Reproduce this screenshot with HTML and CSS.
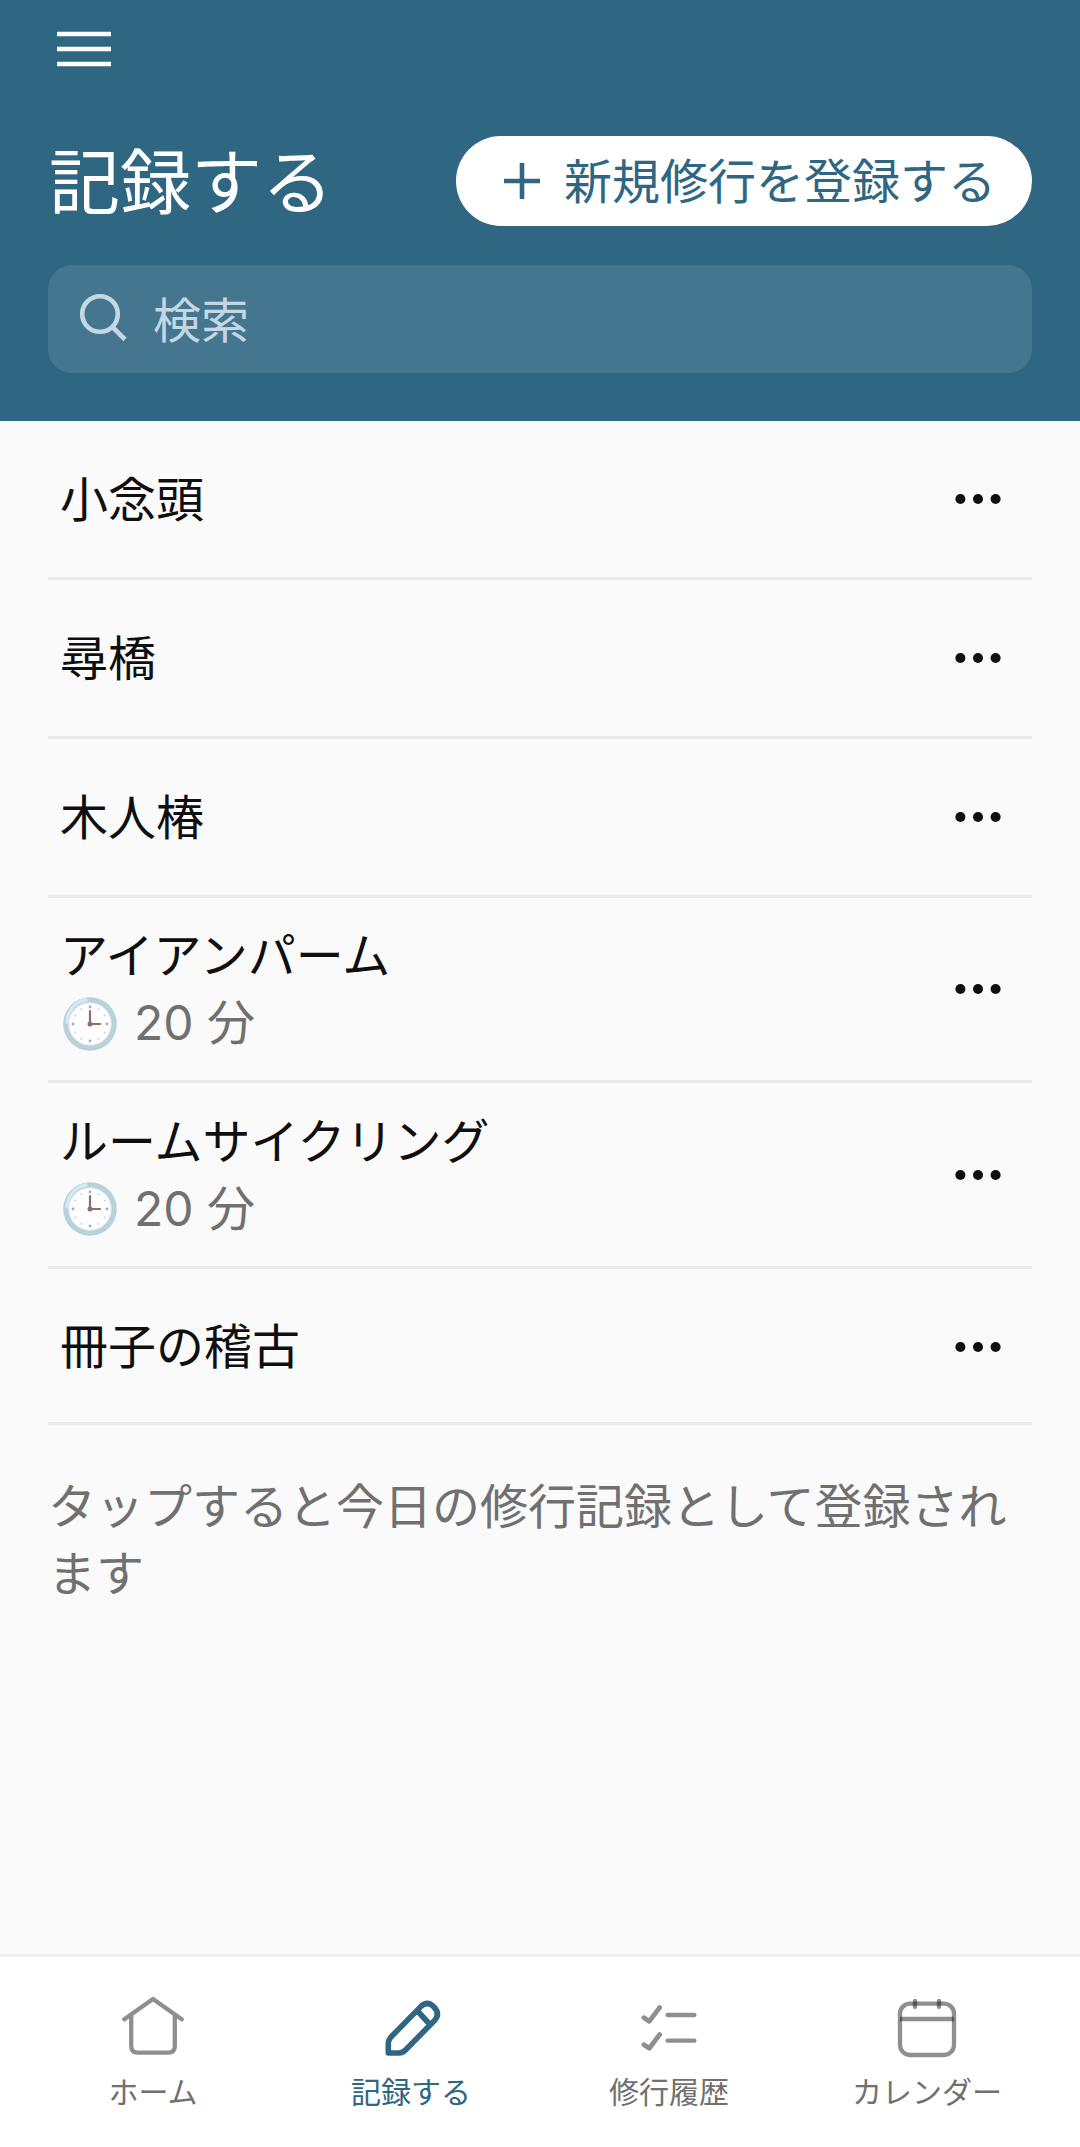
FILE: index.html
```html
<!DOCTYPE html>
<html lang="ja">
<head>
  <meta charset="UTF-8" />
  <meta name="viewport" content="width=device-width, initial-scale=1" />
  <title>記録する</title>
  <link rel="stylesheet" href="styles.css">
</head>
<body>

<!-- shared icons -->
<svg class="defs" width="0" height="0">
  <symbol id="dots" viewBox="0 0 48 48">
    <circle cx="6.4" cy="24" r="5" />
    <circle cx="24" cy="24" r="5" />
    <circle cx="41.6" cy="24" r="5" />
  </symbol>
  <symbol id="clock" viewBox="0 0 54 54">
    <circle cx="27" cy="27" r="26.8" fill="#b8d2dc" />
    <path d="M4 25C5 13 12 5 23 3" fill="none" stroke="#d3eaf4" stroke-width="3.4" stroke-linecap="round" />
    <circle cx="27" cy="27" r="21.3" fill="#fefefe" stroke="#e6e4dc" stroke-width="1" />
    <g fill="#8fb6c6">
      <circle cx="27" cy="10" r="1.4" /><circle cx="44" cy="27" r="1.4" />
      <circle cx="27" cy="44" r="1.4" /><circle cx="10" cy="27" r="1.4" />
    </g>
    <g fill="#c6d3d9">
      <circle cx="35.5" cy="12.3" r="1" /><circle cx="41.7" cy="18.5" r="1" />
      <circle cx="41.7" cy="35.5" r="1" /><circle cx="35.5" cy="41.7" r="1" />
      <circle cx="18.5" cy="41.7" r="1" /><circle cx="12.3" cy="35.5" r="1" />
      <circle cx="12.3" cy="18.5" r="1" /><circle cx="18.5" cy="12.3" r="1" />
    </g>
    <path d="M27 14V27H37" fill="none" stroke="#8d6e68" stroke-width="2.2" stroke-linecap="round" />
    <circle cx="27" cy="27" r="2.5" fill="#8d6e68" />
  </symbol>
</svg>

<header class="header">
  <button class="menu-btn" aria-label="menu">
    <svg width="54" height="36" viewBox="0 0 54 36"><path d="M0 3H54M0 18H54M0 33H54" /></svg>
  </button>
  <div class="title-row">
    <h1>記録する</h1>
    <button class="add-btn">
      <svg width="36" height="36" viewBox="0 0 36 36"><path d="M18 0V36M0 18H36" /></svg>
      <span>新規修行を登録する</span>
    </button>
  </div>
  <div class="search">
    <svg width="48" height="48" viewBox="0 0 48 48"><circle cx="20" cy="18" r="17.8" /><path d="M32.5 31L45 43.5" /></svg>
    <span>検索</span>
  </div>
</header>

<main class="content">
  <ul class="list">
    <li class="item"><div class="name">小念頭</div><svg class="more"><use href="#dots" /></svg></li>
    <li class="item"><div class="name">尋橋</div><svg class="more"><use href="#dots" /></svg></li>
    <li class="item"><div class="name">木人椿</div><svg class="more"><use href="#dots" /></svg></li>
    <li class="item timed">
      <div>
        <div class="name">アイアンパーム</div>
        <div class="time"><svg class="clock"><use href="#clock" /></svg>20 分</div>
      </div>
      <svg class="more"><use href="#dots" /></svg>
    </li>
    <li class="item timed last-timed">
      <div>
        <div class="name">ルームサイクリング</div>
        <div class="time"><svg class="clock"><use href="#clock" /></svg>20 分</div>
      </div>
      <svg class="more"><use href="#dots" /></svg>
    </li>
    <li class="item last"><div class="name">冊子の稽古</div><svg class="more"><use href="#dots" /></svg></li>
  </ul>
  <p class="hint">タップすると今日の修行記録として登録されます</p>
</main>

<nav class="tabbar">
  <a class="tab">
    <svg viewBox="0 0 72 72"><path d="M7.3 27.3L36 7L64.7 27.3M14.2 23V54Q14.2 60.7 21 60.7H51Q57.8 60.7 57.8 54V23" /></svg>
    <span>ホーム</span>
  </a>
  <a class="tab active">
    <svg viewBox="0 0 72 72"><path d="M13.3 61V51.5Q13.3 48 16 45L46 14.4Q52.4 8.4 59 15Q65.5 22 59.5 28.5L30.5 58Q27.5 61 24 61ZM43 19.5L54 31.5" /></svg>
    <span>記録する</span>
  </a>
  <a class="tab">
    <svg viewBox="0 0 72 72"><path class="check" d="M10.9 25.7L16.3 29.3L26.6 15.6M10.9 52.7L16.3 56.3L26.6 42.6" /><path d="M34.6 23H61.4M34.6 48.7H61.4" /></svg>
    <span>修行履歴</span>
  </a>
  <a class="tab">
    <svg viewBox="0 0 72 72"><rect x="9" y="11.7" width="54" height="51.3" rx="10" /><path class="butt" d="M9 27H63" /><path d="M24 9V15M48 9V15" /></svg>
    <span>カレンダー</span>
  </a>
</nav>

</body>
</html>
```

FILE: styles.css
```css
* {
  box-sizing: border-box;
}

body {
  margin: 0;
  min-height: 2147px;
  display: flex;
  flex-direction: column;
  background: #fafafa;
  color: #0f0f0f;
  font-family: Inter, "Noto Sans CJK JP", sans-serif;
  font-size: 48px;
  line-height: 67px;
}

.defs {
  position: absolute;
}

button {
  border: none;
  background: none;
  padding: 0;
  font: inherit;
}

/* header */
.header {
  height: 421px;
  padding: 31px 48px 0;
  background: #2f6681;
  color: white;
}

.menu-btn {
  display: block;
  margin-left: 9px;
  height: 36px;
}

.menu-btn svg {
  display: block;
  stroke: white;
  stroke-width: 4.6;
}

.title-row {
  display: flex;
  justify-content: space-between;
  align-items: center;
  height: 90px;
  margin-top: 69px;
}

h1 {
  margin: 0;
  padding: 1px 0 0 1px;
  font-size: 71px;
  font-weight: 400;
  line-height: 90px;
}

.add-btn {
  display: flex;
  align-items: center;
  gap: 24px;
  width: 576px;
  height: 90px;
  padding-left: 48px;
  border-radius: 45px;
  background: white;
  color: #2f6681;
  white-space: nowrap;
}

.add-btn svg {
  stroke: #2f6681;
  stroke-width: 4.6;
}

.search {
  display: flex;
  align-items: center;
  gap: 25px;
  height: 108px;
  margin-top: 39px;
  padding: 2px 0 0 32px;
  border-radius: 24px;
  background: #45768f;
  color: #c5d7e2;
}

.search svg {
  overflow: visible;
  fill: none;
  stroke: #c5d7e2;
  stroke-width: 4.6;
}

/* list */
.content {
  flex: 1;
  padding: 0 48px;
}

.list {
  margin: 0;
  padding: 0;
  list-style: none;
}

.item {
  display: flex;
  justify-content: space-between;
  align-items: center;
  height: 159px;
  padding: 0 30px 0 12px;
  border-bottom: 3px solid #e9e9e9;
}

.timed {
  height: 185px;
}

.last-timed {
  height: 186px;
}

.last {
  height: 156px;
  padding-top: 2px;
}

.more {
  width: 48px;
  height: 48px;
  fill: #0f0f0f;
}

.time {
  display: flex;
  align-items: center;
  color: #707070;
}

.clock {
  width: 54px;
  height: 54px;
  margin: 2px 17px 0 3px;
}

.hint {
  margin: 48px 0 0;
  color: #707070;
  word-break: break-all;
}

/* bottom tabs */
.tabbar {
  display: flex;
  height: 193px;
  padding: 35px 24px 0;
  border-top: 3px solid #efefef;
  background: white;
}

.tab {
  flex: 1;
  display: flex;
  flex-direction: column;
  align-items: center;
  color: #707070;
  font-size: 30px;
  line-height: 42px;
}

.tab svg {
  width: 72px;
  height: 72px;
  margin-bottom: 7px;
  fill: none;
  stroke: #111;
  stroke-opacity: 0.47;
  stroke-width: 4.3;
  stroke-linecap: round;
  stroke-linejoin: round;
}

.tab .check {
  stroke-width: 4.8;
}

.tab .butt {
  stroke-linecap: butt;
}

.active {
  color: #2f6681;
}

.active svg {
  stroke: #2f6681;
  stroke-opacity: 1;
  stroke-width: 5.6;
}
```
